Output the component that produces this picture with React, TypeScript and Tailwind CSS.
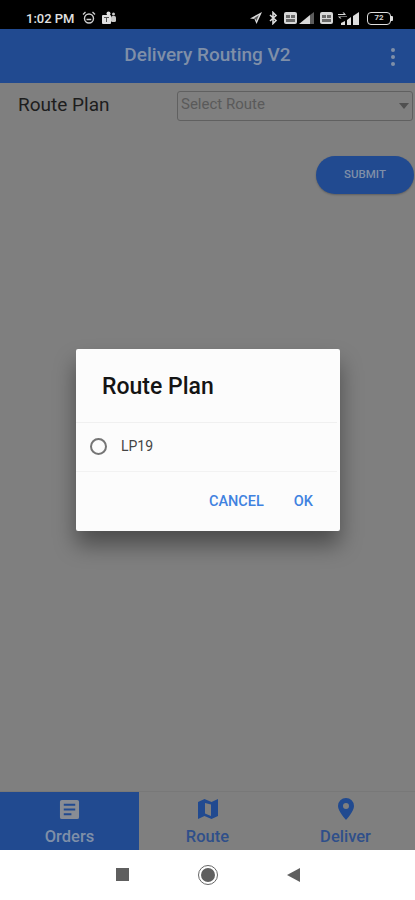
import React from "react";

function SimBox() {
  return (
    <div className="w-[13px] h-[12px] rounded-[2px] bg-[#d8d8d8] flex flex-col items-center justify-center gap-[1px]">
      <div className="w-[9px] h-[3px] flex justify-between">
        <div className="w-[4px] h-[3px] bg-[#6a6a6a]" />
        <div className="w-[4px] h-[3px] bg-[#6a6a6a]" />
      </div>
      <div className="w-[9px] h-[3px] bg-[#6a6a6a]" />
    </div>
  );
}

function StatusIcons() {
  return (
    <div className="flex items-center">
      <svg width="14" height="14" viewBox="0 0 14 14" className="mr-[5px]">
        <path d="M13 1 1 7.500l4.500.5 2 5z" fill="#dcdcdc" />
        <path d="M10 4 4.500 7.500l2 .5.800 2z" fill="#555555" />
      </svg>
      <svg width="10" height="14" viewBox="0 0 10 14" className="mr-[6px]">
        <path d="M2 4l6 5.500L5 12.500V1.500L8 4.500 2 10" fill="none" stroke="#dcdcdc" strokeWidth="1.600" />
      </svg>
      <SimBox />
      <svg width="16" height="12" viewBox="0 0 16 12" className="ml-[2px] mr-[5px]">
        <path d="M0 12 11 3v9z" fill="#d8d8d8" />
        <path d="M11 3 15 0v12h-4z" fill="#5c5c5c" />
      </svg>
      <SimBox />
      <svg width="24" height="13" viewBox="0 0 24 13" className="ml-[4px] mr-[6px]">
        <path d="M1 2h6l-1.500-1.500h1.500L9 3H1zM10 5H3l1.500 1.500H3L1 4.500h9z" fill="#d8d8d8" />
        <path d="M4 13v-2l4-2v4zM10 13V8l4-3v8zM16 13V4l6-4v13z" fill="#dedede" />
      </svg>
      <div className="flex items-center">
        <div className="w-[24px] h-[13px] rounded-[4px] border-[1.5px] border-[#e0e0e0] flex items-center justify-center text-[8px] leading-none font-bold text-[#cfcfcf]">
          72
        </div>
        <div className="w-[2px] h-[5px] bg-[#e0e0e0] rounded-r-[1px]" />
      </div>
    </div>
  );
}

function Tab({ active, icon, label, className }: { active?: boolean; icon: React.ReactNode; label: string; className: string }) {
  return (
    <div className={`${className} flex flex-col items-center pt-[4px] ${active ? "bg-[#214a90] text-[#7f8fa8]" : "text-[#2f4f8a]"}`}>
      <div className="h-[26px] flex items-center justify-center">{icon}</div>
      <div className="text-[16.5px] font-medium leading-[20px] mt-[5px]">{label}</div>
    </div>
  );
}

export default function App() {
  return (
    <div className="relative w-[415px] h-[900px] overflow-hidden flex flex-col bg-[#7f7f7f] font-['Roboto',sans-serif]">
      <div className="h-[29px] shrink-0 bg-black flex items-center justify-between pl-[26px] pr-[22px] pt-[9px] pb-[2px]">
        <div className="flex items-center">
          <span className="text-[13px] font-medium text-[#e2e2e2] leading-none mr-[7px]">1:02 PM</span>
          <svg width="14" height="14" viewBox="0 0 14 14" className="mr-[5px]">
            <circle cx="7" cy="7.500" r="4.500" fill="none" stroke="#d0d0d0" strokeWidth="1.400" />
            <path d="M4.500 8.500h4.800M1 3.500 3.500 1M13 3.500 10.500 1" fill="none" stroke="#d0d0d0" strokeWidth="1.300" />
          </svg>
          <svg width="16" height="14" viewBox="0 0 16 14">
            <rect x="1" y="4" width="9" height="9" rx="1" fill="#e0e0e0" />
            <rect x="10" y="5" width="5" height="6" rx="1.500" fill="#c8c8c8" />
            <circle cx="7.500" cy="2.500" r="2" fill="#e0e0e0" />
            <circle cx="12.500" cy="3" r="1.500" fill="#c8c8c8" />
            <path d="M3 6h5v1H6v4H5V7H3z" fill="#555555" />
          </svg>
        </div>
        <StatusIcons />
      </div>

      <div className="h-[54px] shrink-0 bg-[#214a90] flex items-center justify-center relative">
        <span className="text-[19px] font-medium text-[#7f8fa8] -mt-[1px]">Delivery Routing V2</span>
        <div className="absolute right-[20px] top-[19px] flex flex-col gap-[3px]">
          <div className="w-[4px] h-[4px] rounded-full bg-[#7f8fa8]" />
          <div className="w-[4px] h-[4px] rounded-full bg-[#7f8fa8]" />
          <div className="w-[4px] h-[4px] rounded-full bg-[#7f8fa8]" />
        </div>
      </div>

      <div className="flex-1 flex flex-col pl-[18px] pr-[2px] pt-[8px]">
        <div className="flex items-center justify-between">
          <span className="text-[19px] text-[#1d1d1d] leading-[28px] -mt-[3px]">Route Plan</span>
          <div className="w-[236px] h-[30px] border border-[#606060] rounded-[3px] flex items-center justify-between pl-[3px] pr-[3px] text-[15px] text-[#5a5a5a] pb-[3px]">
            <span>Select Route</span>
            <svg width="10" height="6" viewBox="0 0 10 6" className="mt-[3px]">
              <path d="M0 0h10L5 6z" fill="#505050" />
            </svg>
          </div>
        </div>
        <div className="flex justify-end mt-[35px] -mr-[1px]">
          <div className="w-[98px] h-[38px] rounded-full bg-[#214a90] flex items-center justify-center text-[11.5px] font-medium text-[#7f8fa8] shadow-[0_1px_2px_rgba(0,0,0,0.25)]">
            SUBMIT
          </div>
        </div>
      </div>

      <div className="h-[59px] shrink-0 flex border-t border-[#787878]">
        <Tab
          active
          className="w-[139px]"
          label="Orders"
          icon={
            <svg width="21" height="21" viewBox="0 0 22 22">
              <path
                fillRule="evenodd"
                d="M3 1h16a2 2 0 0 1 2 2v16a2 2 0 0 1-2 2H3a2 2 0 0 1-2-2V3a2 2 0 0 1 2-2zm2 4v2h12V5zm0 5v2h12v-2zm0 5v2h8v-2z"
                fill="#888c94"
              />
            </svg>
          }
        />
        <Tab
          className="flex-1"
          label="Route"
          icon={
            <svg width="22" height="22" viewBox="0 0 22 22">
              <path
                fillRule="evenodd"
                d="M21 1v17l-6.500 3-7-3L1 21V4l6.500-3 7 3zM8 5v10.500l6 2.500V6.500z"
                fill="#214a90"
              />
            </svg>
          }
        />
        <Tab
          className="w-[139px]"
          label="Deliver"
          icon={
            <svg width="18" height="24" viewBox="0 0 18 24">
              <path
                fillRule="evenodd"
                d="M9 1a8 8 0 0 1 8 8c0 5.500-8 14-8 14S1 14.500 1 9a8 8 0 0 1 8-8zm0 5a3 3 0 1 0 0 6 3 3 0 0 0 0-6z"
                fill="#214a90"
              />
            </svg>
          }
        />
      </div>

      <div className="h-[50px] shrink-0 bg-white flex items-center justify-center pb-[1px]">
        <div className="w-[13px] h-[13px] bg-[#5f5f5f]" />
        <div className="w-[20px] h-[20px] rounded-full border border-[#666666] flex items-center justify-center ml-[69px]">
          <div className="w-[14px] h-[14px] rounded-full bg-[#5f5f5f]" />
        </div>
        <svg width="13" height="14" viewBox="0 0 13 14" className="ml-[69px]">
          <path d="M13 0v14L0 7z" fill="#5f5f5f" />
        </svg>
      </div>

      <div className="absolute left-[76px] top-[349px] w-[264px] h-[182px] bg-[#fcfcfc] rounded-[2px] shadow-[0_14px_22px_rgba(0,0,0,0.4)] flex flex-col">
        <div className="h-[74px] flex items-center pl-[26px] pt-[4px] mr-[3px] border-b border-[#f0f0f0]">
          <span className="text-[23px] font-medium text-[#141414]">Route Plan</span>
        </div>
        <div className="h-[49px] flex items-center pl-[14px] pb-[1px] mr-[3px] border-b border-[#f2f2f2]">
          <div className="w-[17px] h-[17px] rounded-full border-[2px] border-[#757575]" />
          <span className="ml-[14px] text-[14px] text-[#444444]">LP19</span>
        </div>
        <div className="flex-1 flex items-center justify-end pr-[27px] text-[14.5px] font-medium text-[#3f82e0] pt-[1px]">
          <span>CANCEL</span>
          <span className="ml-[30px]">OK</span>
        </div>
      </div>
    </div>
  );
}
